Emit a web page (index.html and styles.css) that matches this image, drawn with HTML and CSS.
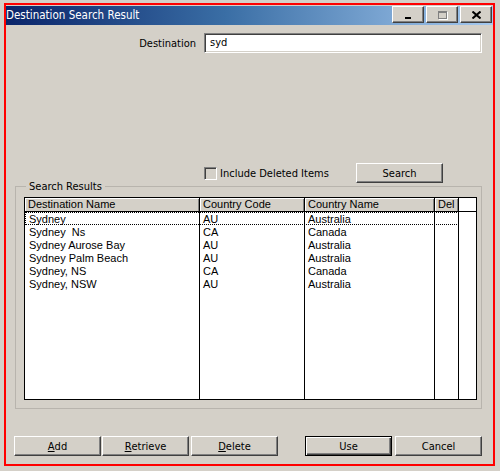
FILE: index.html
```html
<!DOCTYPE html>
<html>
<head>
<meta charset="utf-8">
<link rel="stylesheet" href="styles.css">
</head>
<body>
<div class="window">
  <div class="titlebar">
    <span class="title">Destination Search Result</span>
    <div class="tbtns">
      <div class="tbtn"><span class="min-glyph"></span></div>
      <div class="tbtn"><span class="max-glyph"></span></div>
      <div class="tbtn"><svg width="9" height="8" viewBox="0 0 9 8"><path d="M0.5 0.5 L8.5 7.5 M8.5 0.5 L0.5 7.5" stroke="#000" stroke-width="2" fill="none"/></svg></div>
    </div>
  </div>
  <div class="content">
    <div class="dest-row">
      <label class="dest-label">Destination</label>
      <div class="input">syd</div>
    </div>
    <div class="opt-row">
      <div class="check"></div>
      <span class="check-label">Include Deleted Items</span>
      <div class="btn search-btn">Search</div>
    </div>
    <div class="group">
      <span class="group-label">Search Results</span>
      <div class="table">
        <div class="col c1">
          <div class="th">Destination Name</div>
          <div class="td">Sydney</div>
          <div class="td">Sydney &nbsp;Ns</div>
          <div class="td">Sydney Aurose Bay</div>
          <div class="td">Sydney Palm Beach</div>
          <div class="td">Sydney, NS</div>
          <div class="td">Sydney, NSW</div>
        </div>
        <div class="col c2">
          <div class="th">Country Code</div>
          <div class="td">AU</div>
          <div class="td">CA</div>
          <div class="td">AU</div>
          <div class="td">AU</div>
          <div class="td">CA</div>
          <div class="td">AU</div>
        </div>
        <div class="col c3">
          <div class="th">Country Name</div>
          <div class="td">Australia</div>
          <div class="td">Canada</div>
          <div class="td">Australia</div>
          <div class="td">Australia</div>
          <div class="td">Canada</div>
          <div class="td">Australia</div>
        </div>
        <div class="col c4">
          <div class="th">Del</div>
        </div>
        <div class="col c5">
          <div class="th blank"></div>
        </div>
        <div class="focus"></div>
      </div>
    </div>
    <div class="btn-row">
      <div class="btn"><u>A</u>dd</div>
      <div class="btn"><u>R</u>etrieve</div>
      <div class="btn"><u>D</u>elete</div>
      <div class="spacer"></div>
      <div class="btn default">Use</div>
      <div class="btn">Cancel</div>
    </div>
  </div>
</div>
</body>
</html>
```

FILE: styles.css
```css
html, body {
  margin: 0;
  padding: 0;
  background: #d4d0c8;
}
body {
  width: 500px;
  height: 471px;
  overflow: hidden;
  font-family: "DejaVu Sans Condensed", "DejaVu Sans", sans-serif;
  font-stretch: condensed;
  font-size: 11px;
  color: #000;
}
.window {
  margin: 3px 0 0 4px;
  width: 491px;
  height: 463px;
  box-sizing: border-box;
  border: 2px solid #ff0000;
  display: flex;
  flex-direction: column;
}
.titlebar {
  height: 19px;
  margin-top: 1px;
  background: linear-gradient(to right, #0a246a 0%, #3a6ea5 45%, #a6caf0 100%);
  display: flex;
  align-items: center;
  justify-content: space-between;
  padding-left: 0;
}
.title {
  color: #fff;
  font-size: 11.5px;
  line-height: 19px;
}
.tbtns {
  display: flex;
  gap: 2px;
  padding-right: 1px;
  align-self: flex-start;
}
.tbtn {
  width: 32px;
  height: 17px;
  box-sizing: border-box;
  background: #d4d0c8;
  border: 1px solid;
  border-color: #fff #404040 #404040 #fff;
  box-shadow: inset -1px -1px 0 #808080;
  display: flex;
  align-items: center;
  justify-content: center;
}
.min-glyph {
  width: 6px;
  height: 2px;
  background: #000;
  margin-top: 7px;
}
.max-glyph {
  width: 9px;
  height: 8px;
  box-sizing: border-box;
  border: 1px solid #808080;
  border-top-width: 2px;
  box-shadow: 1px 1px 0 #fff;
}
.content {
  flex: 1;
  display: flex;
  flex-direction: column;
}
.dest-row {
  display: flex;
  align-items: center;
  margin-top: 8px;
  height: 20px;
}
.dest-label {
  width: 190px;
  text-align: right;
  margin-right: 8px;
}
.input {
  width: 278px;
  height: 20px;
  box-sizing: border-box;
  background: #fff;
  border: 1px solid;
  border-color: #808080 #fff #fff #808080;
  box-shadow: inset 1px 1px 0 #404040, inset -1px -1px 0 #d4d0c8;
  padding-left: 5px;
  line-height: 18px;
}
.opt-row {
  display: flex;
  align-items: center;
  margin-top: 110px;
  height: 20px;
  padding-left: 198px;
}
.check {
  width: 13px;
  height: 13px;
  box-sizing: border-box;
  border: 1px solid;
  border-color: #808080 #fff #fff #808080;
  box-shadow: inset 1px 1px 0 #404040, inset -1px -1px 0 #d4d0c8;
}
.check-label {
  margin-left: 3px;
  width: 136px;
}
.btn {
  width: 87px;
  height: 20px;
  box-sizing: border-box;
  border: 1px solid;
  border-color: #fff #404040 #404040 #fff;
  box-shadow: inset -1px -1px 0 #808080;
  display: flex;
  align-items: center;
  justify-content: center;
  line-height: 1;
}
.btn.default {
  border: 1px solid #000;
  box-shadow: inset 1px 1px 0 #fff, inset -1px -1px 0 #404040, inset -2px -2px 0 #808080;
}
.group {
  position: relative;
  margin: 3px 0 0 9px;
  width: 467px;
  height: 223px;
  box-sizing: border-box;
  border: 1px solid #b8b4ad;
  padding: 10px 0 0 8px;
}
.group-label {
  position: absolute;
  top: -7px;
  left: 10px;
  padding: 0 3px;
  background: #d4d0c8;
  line-height: 13px;
}
.table {
  position: relative;
  width: 453px;
  height: 203px;
  box-sizing: border-box;
  border: 1px solid #000;
  background: #fff;
  display: flex;
  font-family: "Liberation Sans", Arial, sans-serif;
  font-stretch: normal;
  font-size: 11px;
}
.col {
  box-sizing: border-box;
  border-right: 1px solid #000;
  display: flex;
  flex-direction: column;
}
.c1 { width: 175px; }
.c2 { width: 105px; }
.c3 { width: 130px; }
.c4 { width: 24px; }
.c5 { width: 17px; border-right: none; }
.th {
  height: 14px;
  box-sizing: border-box;
  background: #d4d0c8;
  border-bottom: 1px solid #000;
  box-shadow: inset 1px 1px 0 #fff, inset -1px 0 0 #808080;
  padding-left: 3px;
  line-height: 13px;
  white-space: nowrap;
  overflow: hidden;
}
.th.blank {
  background: #fff;
  box-shadow: none;
}
.td {
  height: 13px;
  line-height: 15px;
  padding-left: 3px;
  white-space: nowrap;
}
.c1 .td { padding-left: 4px; }
.focus {
  position: absolute;
  left: 0;
  top: 14px;
  width: 434px;
  height: 13px;
  box-sizing: border-box;
  border: 1px dotted #000;
}
.btn-row {
  display: flex;
  margin: 27px 0 0 8px;
  width: 468px;
  gap: 1px;
}
.btn-row .btn:nth-child(3) { margin-left: 1px; }
.spacer { flex: 1; }
.btn-row .default { margin-right: 2px; }
u { text-decoration: underline; text-underline-offset: 1px; }
```
